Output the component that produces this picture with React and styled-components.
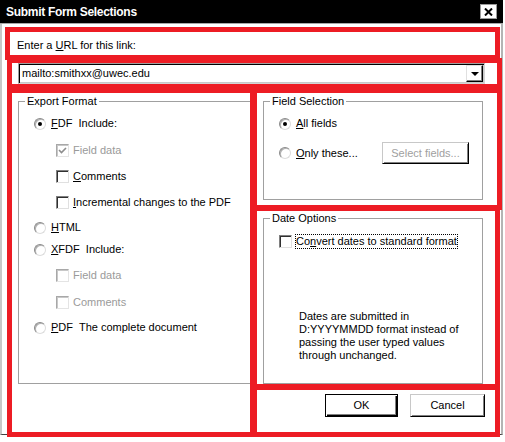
import React from 'react';
import styled, { createGlobalStyle } from 'styled-components';

const GlobalStyle = createGlobalStyle`
  html, body {
    margin: 0;
    padding: 0;
    background: #fff;
  }

  body {
    font-family: "Liberation Sans", Arial, sans-serif;
    font-size: 11px;
    color: #000;
  }
`;

const Page = styled.div`
  position: relative;
  width: 505px;
  height: 442px;
  overflow: hidden;
  background: #fff;
`;

const Window = styled.div`
  width: 503px;
  height: 435px;
  display: flex;
  flex-direction: column;
`;

const TitleBar = styled.div`
  flex: none;
  height: 23px;
  display: flex;
  align-items: center;
  justify-content: space-between;
  padding: 0 6px 0 6px;
  background: #000;
  color: #fff;
  border-bottom: 1px solid #a8a8a8;
  font-size: 12px;
  font-weight: bold;
  letter-spacing: -0.3px;
`;

const CloseButton = styled.div`
  width: 17px;
  height: 15px;
  box-sizing: border-box;
  display: flex;
  align-items: center;
  justify-content: center;
  background: #fff;
  border: 1px solid #9a9a9a;
`;

const Body = styled.div`
  flex: 1;
  display: flex;
  flex-direction: column;
  padding: 15px 16px 0 16px;
  border-left: 2px solid #c8c8c8;
  border-right: 2px solid #b4b4b4;
  border-bottom: 1px solid #404040;
`;

const Prompt = styled.div`
  line-height: 13px;
  margin-left: -1px;
`;

const Combo = styled.div`
  margin-top: 11px;
  height: 21px;
  box-sizing: border-box;
  display: flex;
  align-items: center;
  padding: 0 1px 0 2px;
  border: 1px solid;
  border-color: #a0a0a0 #d4d4d4 #d4d4d4 #a0a0a0;
  box-shadow: inset 1px 1px 0 #000, inset -1px -1px 0 #c8c8c8;
`;

const ComboValue = styled.div`
  flex: 1;
  line-height: 13px;
  padding-left: 1px;
`;

const DropButton = styled.div`
  width: 17px;
  height: 17px;
  box-sizing: border-box;
  display: flex;
  align-items: center;
  justify-content: center;
  background: #fff;
  border: 1px solid;
  border-color: #e0e0e0 #000 #000 #e0e0e0;
  box-shadow: inset -1px -1px 0 #808080;

  &::after {
    content: '';
    border-left: 4px solid transparent;
    border-right: 4px solid transparent;
    border-top: 4px solid #000;
    margin-top: 1px;
  }
`;

const Columns = styled.div`
  margin-top: 11px;
  display: grid;
  grid-template-columns: 233px 1fr;
  column-gap: 12px;
`;

const Stack = styled.div`
  display: flex;
  flex-direction: column;
  gap: 12px;
  margin-right: 2px;
`;

const Group = styled.fieldset`
  margin: 0;
  padding: 0 0 0 6px;
  min-width: 0;
  border: 1px solid #a0a0a0;
  box-sizing: border-box;
  height: ${p => (p.$h ? `${p.$h}px` : 'auto')};
`;

const Legend = styled.legend`
  padding: 0 2px;
  line-height: 13px;
`;

const GroupBody = styled.div`
  display: flex;
  flex-direction: column;
  padding: 9px 0 0 9px;
`;

const Row = styled.div`
  display: flex;
  align-items: center;
  height: ${p => p.$h || 13}px;
  margin-top: ${p => p.$mt || 0}px;
  margin-left: ${p => p.$indent || 0}px;
  padding-right: ${p => p.$pr || 0}px;
  justify-content: ${p => (p.$spread ? 'space-between' : 'flex-start')};
`;

const Option = styled.label`
  display: flex;
  align-items: center;
  gap: ${p => p.$gap || 5}px;
  line-height: 13px;
  color: ${p => (p.$disabled ? '#9a9a9a' : '#000')};
  white-space: pre;
`;

const RadioMark = styled.span`
  flex: none;
  width: 12px;
  height: 12px;
  box-sizing: border-box;
  display: flex;
  align-items: center;
  justify-content: center;
  border-radius: 50%;
  border: 1px solid;
  border-color: #8a8a8a #dcdcdc #dcdcdc #8a8a8a;
  box-shadow: inset 1px 1px 0 #b0b0b0;
  background: #fff;

  &::after {
    content: '';
    display: ${p => (p.$on ? 'block' : 'none')};
    width: 4px;
    height: 4px;
    border-radius: 50%;
    background: #000;
  }
`;

const CheckMark = styled.span`
  flex: none;
  width: 13px;
  height: 13px;
  box-sizing: border-box;
  display: flex;
  align-items: center;
  justify-content: center;
  border: 1px solid;
  border-color: ${p => (p.$disabled ? '#a8a8a8 #e4e4e4 #e4e4e4 #a8a8a8' : '#808080 #e0e0e0 #e0e0e0 #808080')};
  box-shadow: inset 1px 1px 0 ${p => (p.$disabled ? '#c8c8c8' : '#303030')};
  background: #fff;
`;

const FocusText = styled.span`
  border: 1px dotted #000;
  line-height: 13px;
`;

const Note = styled.div`
  margin-top: 61px;
  margin-left: 20px;
  line-height: 13px;
`;

const Button = styled.div`
  width: ${p => p.$w}px;
  height: ${p => p.$h || 23}px;
  box-sizing: border-box;
  display: flex;
  align-items: center;
  justify-content: center;
  background: #fff;
  color: ${p => (p.$disabled ? '#a0a0a0' : '#000')};
  line-height: 13px;
  border: 1px solid;
  border-color: ${p => (p.$default ? '#000' : '#c8c8c8 #000 #000 #c8c8c8')};
  box-shadow: ${p =>
    p.$default
      ? 'inset 1px 1px 0 #fff, inset -1px -1px 0 #000, inset -2px -2px 0 #808080'
      : 'inset 1px 1px 0 #fff, inset -1px -1px 0 #808080'};
`;

const ButtonRow = styled.div`
  margin-top: 10px;
  display: flex;
  justify-content: flex-end;
  gap: 12px;
`;

const Mark = styled.div`
  position: absolute;
  left: ${p => p.$x}px;
  top: ${p => p.$y}px;
  width: ${p => p.$w}px;
  height: ${p => p.$h}px;
  box-sizing: border-box;
  border: 5px solid #ed1c24;
  pointer-events: none;
`;

const marks = [
  { x: 5, y: 27, w: 495, h: 33 },
  { x: 7, y: 58, w: 495, h: 31 },
  { x: 7, y: 88, w: 248, h: 349 },
  { x: 252, y: 88, w: 250, h: 122 },
  { x: 252, y: 206, w: 248, h: 183 },
  { x: 252, y: 385, w: 248, h: 52 },
];

const Tick = () => (
  <svg width="9" height="9" viewBox="0 0 9 9">
    <path d="M1 4 L3.5 6.5 L8 2" fill="none" stroke="#8c8c8c" strokeWidth="1.6" />
  </svg>
);

const Radio = ({ on, children }) => (
  <Option>
    <RadioMark $on={on} />
    <span>{children}</span>
  </Option>
);

const Check = ({ checked, disabled, children }) => (
  <Option $gap={4} $disabled={disabled}>
    <CheckMark $disabled={disabled}>{checked && <Tick />}</CheckMark>
    <span>{children}</span>
  </Option>
);

const App = () => (
  <Page>
    <GlobalStyle />
    <Window>
      <TitleBar>
        <span>Submit Form Selections</span>
        <CloseButton>
          <svg width="9" height="8" viewBox="0 0 9 8">
            <path d="M1 0.5 L8 7.5 M8 0.5 L1 7.5" stroke="#000" strokeWidth="2" />
          </svg>
        </CloseButton>
      </TitleBar>
      <Body>
        <Prompt>Enter a <u>U</u>RL for this link:</Prompt>
        <Combo>
          <ComboValue>mailto:smithxx@uwec.edu</ComboValue>
          <DropButton />
        </Combo>
        <Columns>
          <Group>
            <Legend>Export Format</Legend>
            <GroupBody>
              <Row>
                <Radio on><u>F</u>DF  Include:</Radio>
              </Row>
              <Row $mt={14} $indent={22}>
                <Check checked disabled>Field data</Check>
              </Row>
              <Row $mt={13} $indent={22}>
                <Check><u>C</u>omments</Check>
              </Row>
              <Row $mt={13} $indent={22}>
                <Check><u>I</u>ncremental changes to the PDF</Check>
              </Row>
              <Row $mt={12}>
                <Radio><u>H</u>TML</Radio>
              </Row>
              <Row $mt={9}>
                <Radio><u>X</u>FDF  Include:</Radio>
              </Row>
              <Row $mt={13} $indent={22}>
                <Check disabled>Field data</Check>
              </Row>
              <Row $mt={14} $indent={22}>
                <Check disabled>Comments</Check>
              </Row>
              <Row $mt={12}>
                <Radio><u>P</u>DF  The complete document</Radio>
              </Row>
            </GroupBody>
          </Group>
          <Stack>
            <Group $h={105}>
              <Legend>Field Selection</Legend>
              <GroupBody>
                <Row>
                  <Radio on><u>A</u>ll fields</Radio>
                </Row>
                <Row $h={22} $mt={12} $pr={13} $spread>
                  <Radio><u>O</u>nly these...</Radio>
                  <Button $w={87} $h={22} $disabled>Select fields...</Button>
                </Row>
              </GroupBody>
            </Group>
            <Group $h={172}>
              <Legend>Date Options</Legend>
              <GroupBody>
                <Row $h={15}>
                  <Option $gap={3}>
                    <CheckMark />
                    <FocusText>Co<u>n</u>vert dates to standard format</FocusText>
                  </Option>
                </Row>
                <Note>
                  Dates are submitted in<br />
                  D:YYYYMMDD format instead of<br />
                  passing the user typed values<br />
                  through unchanged.
                </Note>
              </GroupBody>
            </Group>
          </Stack>
        </Columns>
        <ButtonRow>
          <Button $w={73} $default>OK</Button>
          <Button $w={75}>Cancel</Button>
        </ButtonRow>
      </Body>
    </Window>
    {marks.map((m, i) => (
      <Mark key={i} $x={m.x} $y={m.y} $w={m.w} $h={m.h} />
    ))}
  </Page>
);

export default App;
